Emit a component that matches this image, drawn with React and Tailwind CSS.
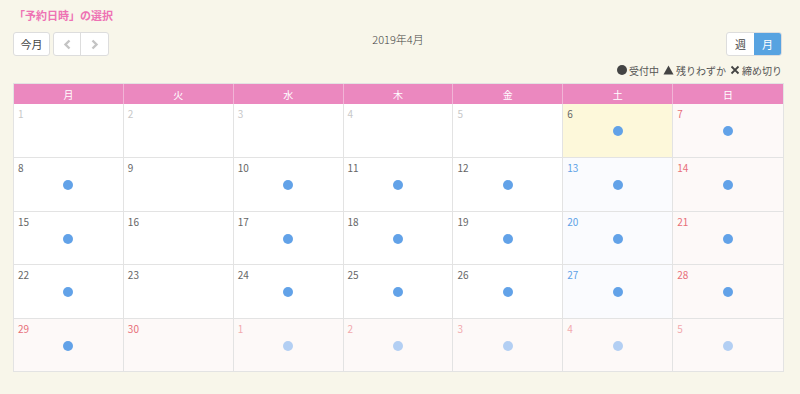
import React from 'react';

const HEAD = ['月', '火', '水', '木', '金', '土', '日'];

// kind: prev | normal | sat | sun | today | next
const ROWS = [
  [['1', 'prev', 0], ['2', 'prev', 0], ['3', 'prev', 0], ['4', 'prev', 0], ['5', 'prev', 0], ['6', 'today', 1], ['7', 'sun', 1]],
  [['8', 'normal', 1], ['9', 'normal', 0], ['10', 'normal', 1], ['11', 'normal', 1], ['12', 'normal', 1], ['13', 'sat', 1], ['14', 'sun', 1]],
  [['15', 'normal', 1], ['16', 'normal', 0], ['17', 'normal', 1], ['18', 'normal', 1], ['19', 'normal', 1], ['20', 'sat', 1], ['21', 'sun', 1]],
  [['22', 'normal', 1], ['23', 'normal', 0], ['24', 'normal', 1], ['25', 'normal', 1], ['26', 'normal', 1], ['27', 'sat', 1], ['28', 'sun', 1]],
  [['29', 'sun', 1], ['30', 'sun', 0], ['1', 'next', 1], ['2', 'next', 1], ['3', 'next', 1], ['4', 'next', 1], ['5', 'next', 1]],
];

const cellBg = {
  prev: 'bg-white',
  normal: 'bg-white',
  sat: 'bg-[#fafbfe]',
  sun: 'bg-[#fdf9f8]',
  today: 'bg-[#fdf8da]',
  next: 'bg-[#fdf9f8]',
};

const numColor = {
  prev: 'text-[#c8c8c8]',
  normal: 'text-[#666]',
  sat: 'text-[#5ea2e6]',
  sun: 'text-[#e86f78]',
  today: 'text-[#666]',
  next: 'text-[#f2a9ae]',
};

const Chevron = ({ dir }) => (
  <svg width="9" height="11" viewBox="0 0 9 11">
    <path
      d={dir === 'left' ? 'M6.5 1.5 L2.5 5.5 L6.5 9.5' : 'M2.5 1.5 L6.5 5.5 L2.5 9.5'}
      fill="none"
      stroke="#c4c4c4"
      strokeWidth="2.4"
    />
  </svg>
);

export default function App() {
  return (
    <div
      className="w-[800px] h-[394px] bg-[#f8f6ea] text-[#555] overflow-hidden"
      style={{ fontFamily: '"Noto Sans CJK JP", "Noto Sans", sans-serif' }}
    >
      <div className="pl-[14px] pr-[18px] pt-[7px]">
        {/* Title */}
        <div className="text-[11px] leading-[16px] font-bold text-[#ee72b4]">「予約日時」の選択</div>

        {/* Toolbar */}
        <div className="mt-[9px] grid grid-cols-[1fr_auto_1fr] items-center h-[24px]">
          <div className="flex items-center gap-[3px] -ml-[1px]">
            <div className="h-[24px] w-[37px] flex items-center justify-center bg-white border border-[#ddd] rounded-[3px] text-[11px] text-[#444]">
              今月
            </div>
            <div className="flex h-[24px] bg-white border border-[#ddd] rounded-[3px]">
              <div className="w-[27px] flex items-center justify-center border-r border-[#ddd]">
                <Chevron dir="left" />
              </div>
              <div className="w-[27px] flex items-center justify-center">
                <Chevron dir="right" />
              </div>
            </div>
          </div>
          <div className="text-[11px] font-light text-[#444] -mt-[9px]">2019年4月</div>
          <div className="flex justify-end">
            <div className="flex h-[24px] rounded-[3px] overflow-hidden border border-[#ddd] bg-white">
              <div className="w-[27px] flex items-center justify-center text-[11px] text-[#444]">週</div>
              <div className="w-[27px] flex items-center justify-center text-[11px] text-white bg-[#57a3e1]">月</div>
            </div>
          </div>
        </div>

        {/* Legend */}
        <div className="mt-[6px] flex justify-end items-center gap-[3px] text-[10px] text-[#555] h-[16px]">
          <span className="flex items-center gap-[2px]">
            <span className="inline-block w-[10px] h-[10px] rounded-full bg-[#444]" />
            受付中
          </span>
          <span className="flex items-center gap-[2px] ml-[1px]">
            <svg width="11" height="10" viewBox="0 0 11 10"><path d="M5.5 0.5 L10.5 9.5 L0.5 9.5 Z" fill="#444" /></svg>
            残りわずか
          </span>
          <span className="flex items-center gap-[2px] ml-[1px]">
            <svg width="10" height="10" viewBox="0 0 10 10"><path d="M1.5 1.5 L8.5 8.5 M8.5 1.5 L1.5 8.5" stroke="#444" strokeWidth="1.8" /></svg>
            締め切り
          </span>
        </div>

        {/* Calendar */}
        <div className="mt-[5px] -ml-[1px] w-[771px] border border-[#e3e3e3]">
          <div className="grid grid-cols-7 bg-[#eb88bf] h-[20px]">
            {HEAD.map((h, i) => (
              <div
                key={h}
                className={`flex items-center justify-center text-[10px] text-white ${i < 6 ? 'border-r border-[#f1b4d6]' : ''}`}
              >
                {h}
              </div>
            ))}
          </div>
          {ROWS.map((row, r) => (
            <div key={r} className={`grid grid-cols-7 h-[53.4px] ${r > 0 ? 'border-t border-[#e3e3e3]' : ''}`}>
              {row.map(([d, kind, dot], c) => (
                <div
                  key={c}
                  className={`${cellBg[kind]} ${c < 6 ? 'border-r border-[#e3e3e3]' : ''}`}
                >
                  <div className={`pl-[4px] pt-[3px] text-[10px] leading-[14px] ${numColor[kind]}`}>{d}</div>
                  {dot ? (
                    <div className="flex justify-center mt-[5px]">
                      <span
                        className={`block w-[10px] h-[10px] rounded-full ${kind === 'next' ? 'bg-[#b3cff3]' : 'bg-[#62a2e8]'}`}
                      />
                    </div>
                  ) : null}
                </div>
              ))}
            </div>
          ))}
        </div>
      </div>
    </div>
  );
}
